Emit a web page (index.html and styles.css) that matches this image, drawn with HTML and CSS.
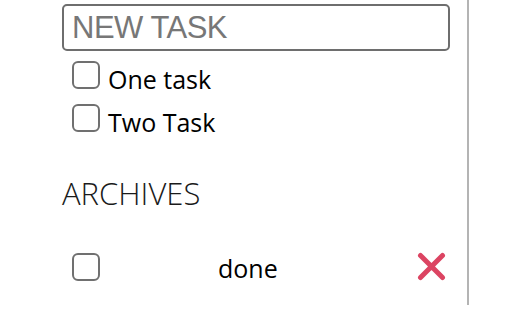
FILE: index.html
```html
<!DOCTYPE html>
<html lang="en">
<head>
    <meta charset="UTF-8">
    <meta name="viewport" content="width=device-width, initial-scale=1.0">
    <title>Todo</title>
    <link rel="stylesheet" href="styles.css">
</head>
<body>
    <div class="todo_panel">
        <!-- new task -->
        <input type="text" class="new_task" placeholder="NEW TASK">
        <!-- task list -->
        <ul class="task_list">
            <li><input type="checkbox" class="check"><span>One task</span></li>
            <li><input type="checkbox" class="check"><span>Two Task</span></li>
        </ul>
        <!-- archives -->
        <h2 class="archive_title">ARCHIVES</h2>
        <div class="archive_row">
            <input type="checkbox" class="check">
            <span class="archive_text">done</span>
            <button class="remove_btn" type="button">
                <svg width="29" height="29" viewBox="0 0 29 29">
                    <path d="M3.5 3.5 L25.5 25.5 M25.5 3.5 L3.5 25.5" stroke="#dc4462" stroke-width="5" stroke-linecap="round" fill="none"/>
                </svg>
            </button>
        </div>
    </div>
</body>
</html>
```

FILE: styles.css
```css
body{
    margin: 0;
    background: #fff;
    font-family: "Open Sans", "Noto Sans", sans-serif;
    color: #000;
}
.todo_panel{
    box-sizing: border-box;
    width: 407px;
    height: 305px;
    margin-left: 62px;
    padding-top: 4px;
    padding-right: 17px;
    border-right: 2px solid #b4b4b4;
}
.new_task{
    display: block;
    box-sizing: border-box;
    width: 100%;
    height: 47px;
    margin: 0;
    padding: 0 8px;
    border: 2px solid #6e6e6e;
    border-radius: 5px;
    font-family: "Liberation Sans", Arial, sans-serif;
    font-size: 31px;
    letter-spacing: -0.5px;
    outline: none;
}
.new_task::placeholder{
    color: #777;
}
.check{
    appearance: none;
    -webkit-appearance: none;
    box-sizing: border-box;
    width: 28px;
    height: 28px;
    margin: 0;
    border: 2px solid #707070;
    border-radius: 6px;
    background: #fff;
    flex-shrink: 0;
}
.task_list{
    list-style: none;
    margin: 7px 0 0;
    padding: 0 0 0 10px;
}
.task_list li{
    display: flex;
    align-items: baseline;
    gap: 8px;
    height: 43px;
    font-size: 25px;
    line-height: 43px;
}
.task_list .check{
    margin-bottom: -1px;
}
.archive_title{
    margin: 29px 0 0;
    font-size: 31px;
    font-weight: 300;
    line-height: 40px;
    color: #1a1a1a;
}
.archive_row{
    display: flex;
    align-items: center;
    height: 43px;
    margin-top: 32px;
    padding: 0 4px 0 10px;
    font-size: 25px;
    line-height: 43px;
}
.archive_text{
    margin-left: 118px;
    padding-top: 3px;
}
.remove_btn{
    margin-left: auto;
    padding: 0;
    border: 0;
    background: none;
    display: flex;
}
```
